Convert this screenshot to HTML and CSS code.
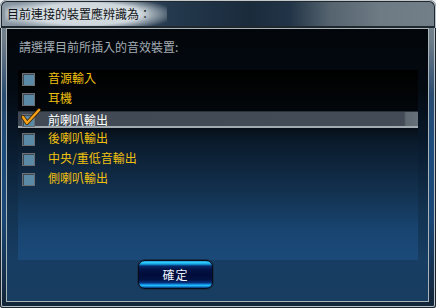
FILE: index.html
```html
<!DOCTYPE html>
<html lang="zh-Hant">
<head>
<meta charset="utf-8">
<title>音效裝置</title>
<link rel="stylesheet" href="styles.css">
</head>
<body>
<div class="window">
  <div class="titlebar"><span class="title">目前連接的裝置應辨識為：</span></div>
  <div class="panel">
    <div class="label">請選擇目前所插入的音效裝置:</div>
    <div class="list">
      <div class="row"><span class="box"></span><span class="text">音源輸入</span></div>
      <div class="row"><span class="box"></span><span class="text">耳機</span></div>
      <div class="row selected"><span class="box">
        <svg class="check" width="20" height="18" viewBox="0 0 20 18"><path d="M2 9 L6 15 L18 2" fill="none" stroke="#3a2000" stroke-width="4" stroke-linecap="round" stroke-linejoin="round"/><path d="M2 9 L6 15 L18 2" fill="none" stroke="#f5a21a" stroke-width="2.4" stroke-linecap="round" stroke-linejoin="round"/></svg>
      </span><span class="text">前喇叭輸出</span></div>
      <div class="row"><span class="box"></span><span class="text">後喇叭輸出</span></div>
      <div class="row"><span class="box"></span><span class="text">中央/重低音輸出</span></div>
      <div class="row"><span class="box"></span><span class="text">側喇叭輸出</span></div>
    </div>
    <div class="footer"><button class="btn">確定</button></div>
  </div>
</div>
</body>
</html>
```
FILE: styles.css
```css
html, body {
  margin: 0;
  padding: 0;
  background: #e6eaee;
}
body {
  font-family: "Noto Sans CJK TC", "Noto Sans CJK SC", "Liberation Sans", sans-serif;
  font-size: 12px;
}
.window {
  width: 436px;
  height: 308px;
  box-sizing: border-box;
  display: flex;
  flex-direction: column;
  padding: 0 7px 6px 6px;
  border-radius: 7px 7px 3px 3px;
  background:
    linear-gradient(to bottom, #7e8c98 0px, #6f7d89 40px, #2a4c70 95px, #1c4c7c 150px, #1a4674 220px, #13263a 300px);
  box-shadow: inset 0 0 0 1px #1a222a, inset 0 0 0 2px #b8c2ca;
}
.titlebar {
  height: 28px;
  flex: none;
  display: flex;
  align-items: center;
  margin: 0 -7px 0 -6px;
  padding-left: 9px;
  border-radius: 7px 7px 0 0;
  background: linear-gradient(90deg, #8e9ba6 0px, #6c7d8c 40px, #24394e 170px, #1a2b3c 250px, #223447 290px, #55646f 330px, #6e7a84 380px, #737f88 436px);
  box-shadow: inset 0 1px 0 #c0c8ce, inset 1px 0 0 #b8c2ca, inset -1px 0 0 #b8c2ca, inset 0 0 0 2px #20282e;
}
.title {
  color: #101418;
  line-height: 16px;
  padding: 4px 16px 4px 2px;
  margin-left: -4px;
  background: radial-gradient(ellipse 56% 75% at 50% 50%, rgba(214,222,226,0.95) 60%, rgba(200,210,216,0) 100%);
  text-shadow: 0 0 4px #dfe5e8, 0 0 6px #dfe5e8;
}
.panel {
  flex: 1;
  display: flex;
  flex-direction: column;
  border: 1px solid #a9b3ba;
  background: linear-gradient(to bottom, #02060a 0px, #040a12 60px, #08182a 110px, #123250 180px, #173d62 230px, #183d61 272px);
}
.label {
  color: #a4acb4;
  line-height: 16px;
  margin: 10px 0 0 12px;
}
.list {
  height: 190px;
  margin: 15px 10px 0 11px;
  box-sizing: border-box;
  padding-top: 0;
  background: linear-gradient(to bottom, #000000 0px, #03070b 40px, #070f18 58px, #0a1a2a 70px, #12304e 120px, #184470 160px, #1b4a79 190px);
}
.row {
  height: 20px;
  display: flex;
  align-items: center;
  position: relative;
  box-sizing: border-box;
}
.row:first-child {
  margin-top: -2px;
}
.row.selected {
  background: linear-gradient(90deg, #414a54 0, #434c56 386px, #5f6972 388px, #67717a 400px);
  box-shadow: inset 0 -2px 0 #a3abb2, inset 0 1px 0 #2a323a;
  height: 17px;
  margin: 3px 0 0;
}
.row.selected + .row {
  margin-top: 0;
}
.box {
  width: 11px;
  height: 11px;
  margin: 3px 0 0 4px;
  flex: none;
  background: #5a8aa6;
  border: 1px solid #6a7076;
  box-shadow: inset 1px 1px 0 #404a52;
  position: relative;
}
.text {
  color: #f0c010;
  margin-left: 13px;
  line-height: 16px;
}
.selected .text {
  color: #ffffff;
}
.selected .box {
  margin-top: 2px;
}
.check {
  position: absolute;
  left: -2px;
  top: -7px;
}
.footer {
  display: flex;
  padding-left: 131px;
}
.btn {
  width: 75px;
  height: 29px;
  padding: 0;
  border: 1px solid #060c1a;
  border-radius: 7px;
  background: linear-gradient(to bottom, #1b7cc0 0px, #34d6ff 1px, #16a4e6 3px, #062a6a 5px, #021448 8px, #010c3a 50%, #021244 70%, #06307a 80%, #0d7ed4 86%, #25c4ff 90%, #0e76c8 96%, #0a2a60 100%);
  box-shadow: 0 0 0 1px #16304c;
  color: #eef2ff;
  font-family: "Noto Sans CJK TC", "Noto Sans CJK SC", sans-serif;
  font-size: 12px;
  line-height: 16px;
  letter-spacing: 1px;
}
```
